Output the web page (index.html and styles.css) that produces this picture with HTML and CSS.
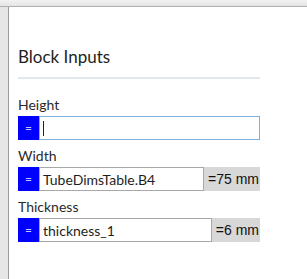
FILE: index.html
```html
<!DOCTYPE html>
<html lang="en">
<head>
    <meta charset="UTF-8">
    <title>Block Inputs</title>
    <link rel="stylesheet" href="styles.css">
</head>
<body>
    <div class="topbar"></div>
    <div class="panel">
        <h2 class="panel-title">Block Inputs</h2>
        <div class="divider"></div>

        <div class="field">
            <label class="field-label">Height</label>
            <div class="field-row">
                <span class="eq-btn">=</span>
                <div class="field-input focused"><span class="caret"></span></div>
            </div>
        </div>

        <div class="field">
            <label class="field-label">Width</label>
            <div class="field-row">
                <span class="eq-btn">=</span>
                <div class="field-input">TubeDimsTable.B4</div>
                <span class="field-result">=75 mm</span>
            </div>
        </div>

        <div class="field">
            <label class="field-label">Thickness</label>
            <div class="field-row">
                <span class="eq-btn">=</span>
                <div class="field-input">thickness_1</div>
                <span class="field-result">=6 mm</span>
            </div>
        </div>
    </div>
</body>
</html>
```

FILE: styles.css
```css
html, body {
    margin: 0;
    height: 100%;
}

body {
    display: flex;
    flex-direction: column;
    background-color: #e6e6e6;
    font-family: Lato, "Open Sans", sans-serif;
    color: #222;
    overflow: hidden;
}

.topbar {
    flex: none;
    height: 6px;
    background: linear-gradient(#f2f2f2, #e4e4e4);
    border-bottom: 1px solid #b0b0b0;
}

.panel {
    flex: 1;
    margin-left: 8px;
    border-left: 1px solid #9a9a9a;
    background-color: #fff;
    padding: 40px 0 0 9px;
}

.panel-title {
    width: 242px;
    margin: 0;
    font-size: 17px;
    line-height: 20px;
    font-weight: normal;
    color: #1e1e1e;
}

.divider {
    width: 242px;
    height: 2px;
    margin-top: 10px;
    margin-bottom: 16px;
    background-color: #dfe8f0;
}

.field {
    width: 242px;
    margin-bottom: 6px;
}

.field-label {
    display: block;
    font-size: 14px;
    line-height: 20px;
    color: #2a2a2a;
}

.field-row {
    display: flex;
    height: 24px;
    margin-top: 1px;
}

.eq-btn {
    width: 21px;
    flex: none;
    background-color: #0000ff;
    color: #c8c8ff;
    font-size: 12px;
    line-height: 24px;
    text-align: center;
}

.field-input {
    flex: 1;
    display: flex;
    align-items: center;
    padding-left: 3px;
    border: 1px solid #a8a8a8;
    font-size: 14px;
    color: #1e1e1e;
}

.field-input.focused {
    border-color: #7eb0e0;
}

.caret {
    width: 1px;
    height: 15px;
    background-color: #222;
}

.field-result {
    flex: none;
    padding: 0 1px 0 4px;
    background-color: #d8d8d8;
    font-family: "Liberation Sans", Arial, sans-serif;
    font-size: 14px;
    line-height: 24px;
    color: #111;
}
```
